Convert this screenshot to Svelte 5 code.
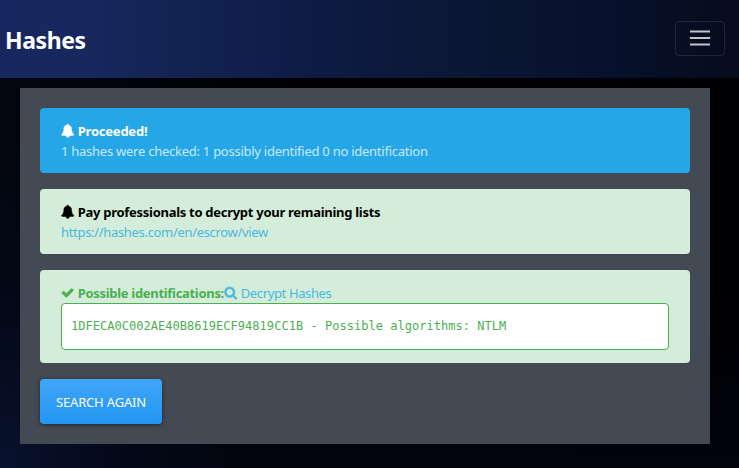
<script>
  const bell = 'M912 1696q0-16-16-16-59 0-101.5-42.5t-42.5-101.5q0-16-16-16t-16 16q0 73 51.5 124.5t124.5 51.5q16 0 16-16zm816-288q0 52-38 90t-90 38h-448q0 106-75 181t-181 75-181-75-75-181h-448q-52 0-90-38t-38-90q50-42 91-88t85-119.5 74.5-158.5 50-206 19.5-260q0-152 117-282.5t307-158.5q-8-19-8-39 0-40 28-68t68-28 68 28 28 68q0 20-8 39 190 28 307 158.5t117 282.5q0 139 19.5 260t50 206 74.5 158.5 85 119.5 91 88z';
  const check = 'M1671 566q0 40-28 68l-724 724-136 136q-28 28-68 28t-68-28l-136-136-362-362q-28-28-28-68t28-68l136-136q28-28 68-28t68 28l294 295 656-657q28-28 68-28t68 28l136 136q28 28 28 68z';
  const search = 'M1216 832q0-185-131.5-316.5t-316.5-131.5-316.5 131.5-131.5 316.5 131.5 316.5 316.5 131.5 316.5-131.5 131.5-316.5zm512 832q0 52-38 90t-90 38q-54 0-90-38l-343-342q-179 124-399 124-143 0-273.5-55.5t-225-150-150-225-55.5-273.5 55.5-273.5 150-225 225-150 273.5-55.5 273.5 55.5 225 150 150 225 55.5 273.5q0 220-124 399l343 343q37 37 37 90z';
</script>

{#snippet icon(path)}
  <svg class="icon" viewBox="0 0 1792 1792" aria-hidden="true"><path d={path} /></svg>
{/snippet}

<div class="page">
  <header>
    <span class="brand">Hashes</span>
    <button class="toggler" aria-label="Menu">
      <svg width="30" height="30" viewBox="0 0 30 30"><path d="M5 7.5h20M5 14h20M5 20.5h20" /></svg>
    </button>
  </header>
  <main>
    <section class="alert info">
      <div class="line">{@render icon(bell)}<strong class="t1">Proceeded!</strong></div>
      <div class="line"><span class="t2">1 hashes were checked: 1 possibly identified 0 no identification</span></div>
    </section>
    <section class="alert pay">
      <div class="line">{@render icon(bell)}<strong class="t3">Pay professionals to decrypt your remaining lists</strong></div>
      <div class="line"><a class="t4" href="https://hashes.com/en/escrow/view">https://hashes.com/en/escrow/view</a></div>
    </section>
    <section class="alert found">
      <div class="line">
        {@render icon(check)}<strong class="t5">Possible identifications:</strong>
        <a class="decrypt" href="#decrypt">{@render icon(search)}<span class="t6">Decrypt Hashes</span></a>
      </div>
      <pre>1DFECA0C002AE40B8619ECF94819CC1B - Possible algorithms: NTLM</pre>
    </section>
    <button class="again"><span class="t7">SEARCH AGAIN</span></button>
  </main>
</div>

<style>
  .page {
    box-sizing: border-box;
    width: 739px;
    height: 468px;
    overflow: hidden;
    background:
      radial-gradient(ellipse 260px 340px at 0 100%, #08122e 0%, rgba(4, 10, 28, 0.6) 50%, transparent 100%),
      linear-gradient(transparent 60%, rgba(2, 5, 16, 0.8)),
      linear-gradient(90deg, #03060f 0, #010205 30%, #000002 100%);
    font-family: 'Noto Sans', 'Open Sans', sans-serif;
    font-size: 13px;
  }
  header {
    box-sizing: border-box;
    display: flex;
    justify-content: space-between;
    align-items: flex-start;
    height: 78px;
    padding: 21px 14px 0 5px;
    background: linear-gradient(90deg, #16285f 0, #16285d 80px, #0e1c46 300px, #0a1632 480px, #07102a 630px, #060c1c 739px);
  }
  .brand {
    font-size: 23px;
    line-height: 38px;
    font-weight: 700;
    color: #fff;
    letter-spacing: -0.4px;
  }
  .toggler {
    box-sizing: border-box;
    display: flex;
    justify-content: center;
    width: 50px;
    height: 35px;
    padding: 2px 0 0;
    background: none;
    border: 1px solid #1f2635;
    border-radius: 4px;
  }
  .toggler path {
    stroke: #c1c3c8;
    stroke-width: 2;
    fill: none;
  }
  main {
    box-sizing: border-box;
    display: flex;
    flex-direction: column;
    align-items: stretch;
    gap: 16px;
    width: 690px;
    height: 356px;
    margin: 10px 0 0 20px;
    padding: 20px;
    background: #434a54;
  }
  .alert {
    padding: 13px 21px;
    border-radius: 4px;
    background: #d4edda;
  }
  .line {
    display: flex;
    align-items: center;
    height: 20px;
    line-height: 20px;
    white-space: nowrap;
  }
  .icon {
    width: 13.4px;
    height: 13.4px;
    flex: none;
    margin: 0 3.4px 1px 0;
    fill: currentColor;
    stroke: currentColor;
    stroke-width: 60;
    overflow: visible;
  }
  .info { background: #25a6e6; color: #fff; }
  .info .t2 { color: #c9e9f9; }
  .pay { height: 39px; color: #000; }
  .info { height: 39px; }
  .found { color: #4caf50; }
  a { color: #4ab8de; text-decoration: none; }
  .decrypt { display: flex; align-items: center; }
  .t1 { letter-spacing: -0.23px; }
  .t3 { letter-spacing: -0.285px; }
  .t5 { letter-spacing: -0.31px; }
  .t2 { letter-spacing: -0.255px; }
  .t4 { letter-spacing: -0.32px; }
  .t6 { letter-spacing: -0.37px; }
  pre {
    box-sizing: border-box;
    height: 47px;
    margin: 0;
    padding: 0 9px;
    border: 1px solid #4caf50;
    border-radius: 4px;
    background: #fff;
    color: #4caf50;
    font: 12px/45px 'DejaVu Sans Mono', 'Liberation Mono', monospace;
    letter-spacing: 0.03px;
  }
  .again {
    align-self: flex-start;
    width: 122px;
    height: 45px;
    padding: 1px 0 0;
    border: 0;
    border-radius: 4px;
    background: linear-gradient(#42a5f5, #2196f3);
    box-shadow: 0 1px 4px rgba(0, 0, 0, 0.5);
    color: #fff;
    font: 13px/44px 'Noto Sans', 'Open Sans', sans-serif;
  }
  .t7 { letter-spacing: -0.18px; }
</style>
